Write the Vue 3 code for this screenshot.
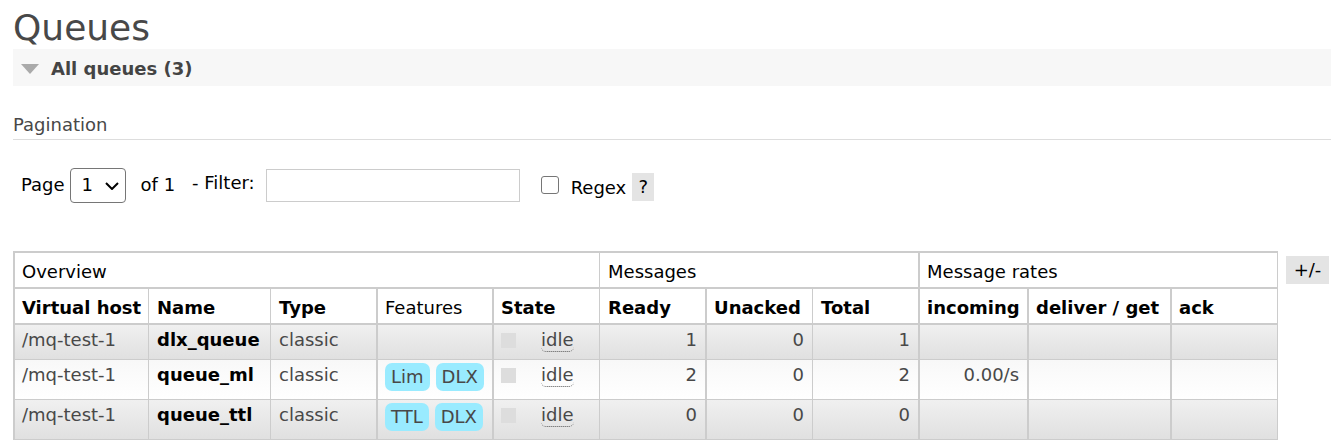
<script setup>
import { ref } from 'vue'

const page = ref('1')
const filter = ref('')
const regex = ref(false)

const queues = [
  { vhost: '/mq-test-1', name: 'dlx_queue', type: 'classic', features: [], state: 'idle', ready: 1, unacked: 0, total: 1, incoming: '' },
  { vhost: '/mq-test-1', name: 'queue_ml', type: 'classic', features: ['Lim', 'DLX'], state: 'idle', ready: 2, unacked: 0, total: 2, incoming: '0.00/s' },
  { vhost: '/mq-test-1', name: 'queue_ttl', type: 'classic', features: ['TTL', 'DLX'], state: 'idle', ready: 0, unacked: 0, total: 0, incoming: '' },
]
</script>

<template>
  <main class="page">
    <h1>Queues</h1>
    <h2>
      <button class="section-toggle" type="button" aria-expanded="true">
        <svg class="arrow" viewBox="0 0 18 10" aria-hidden="true"><path d="M0 0H18L9 10Z" /></svg>
        All queues (3)
      </button>
    </h2>

    <h3>Pagination</h3>
    <form class="filters" @submit.prevent>
      <label for="page">Page</label>
      <span class="select-wrap">
        <select id="page" v-model="page"><option>1</option></select>
        <svg class="chevron" viewBox="0 0 14 8" aria-hidden="true"><path d="M1 1L7 7L13 1" /></svg>
      </span>
      <span class="of">of 1</span>
      <label class="filter-label" for="filter">- Filter:</label>
      <input id="filter" v-model="filter" class="filter" type="text" />
      <input id="regex" v-model="regex" class="check" type="checkbox" />
      <label class="regex-label" for="regex">Regex</label>
      <button class="help" type="button">?</button>
    </form>

    <div class="listing">
      <table>
        <colgroup>
          <col class="c-vhost" /><col class="c-name" /><col class="c-medium" /><col class="c-features" />
          <col class="c-wide" /><col class="c-medium" /><col class="c-wide" /><col class="c-medium" />
          <col class="c-incoming" /><col class="c-deliver" /><col class="c-wide" />
        </colgroup>
        <thead>
          <tr class="groups">
            <th class="thick" colspan="5" scope="colgroup">Overview</th>
            <th colspan="3" scope="colgroup">Messages</th>
            <th class="thick" colspan="3" scope="colgroup">Message rates</th>
          </tr>
          <tr>
            <th class="thick" scope="col">Virtual host</th>
            <th scope="col">Name</th>
            <th scope="col">Type</th>
            <th class="thick plain" scope="col">Features</th>
            <th class="thick" scope="col">State</th>
            <th scope="col">Ready</th>
            <th class="thick" scope="col">Unacked</th>
            <th scope="col">Total</th>
            <th class="thick" scope="col">incoming</th>
            <th class="thick" scope="col">deliver / get</th>
            <th class="thick" scope="col">ack</th>
          </tr>
        </thead>
        <tbody>
          <tr v-for="q in queues" :key="q.name">
            <td class="thick">{{ q.vhost }}</td>
            <td><a href="#">{{ q.name }}</a></td>
            <td>{{ q.type }}</td>
            <td class="thick">
              <div v-if="q.features.length" class="tags">
                <span v-for="f in q.features" :key="f" class="tag">{{ f }}</span>
              </div>
            </td>
            <td class="thick">
              <div class="state"><i class="square"></i><abbr>{{ q.state }}</abbr></div>
            </td>
            <td class="num">{{ q.ready }}</td>
            <td class="num thick">{{ q.unacked }}</td>
            <td class="num">{{ q.total }}</td>
            <td class="num thick">{{ q.incoming }}</td>
            <td class="thick"></td>
            <td class="thick"></td>
          </tr>
        </tbody>
      </table>
      <button class="columns" type="button">+/-</button>
    </div>
  </main>
</template>

<style>
body {
  margin: 0;
  background: #fff;
}
</style>

<style scoped>
.page {
  padding: 6px 0 8px 13px;
  font: 18px/22px Verdana, "DejaVu Sans", sans-serif;
  color: #484848;
}
h1, h2, h3 {
  margin: 0;
  font-size: 18px;
  font-weight: normal;
}
h1 {
  font-size: 36px;
  line-height: 43px;
}
button {
  margin: 0;
  border: 0;
  padding: 0;
  font: inherit;
}
.section-toggle {
  display: flex;
  align-items: center;
  gap: 12px;
  width: 100%;
  height: 37px;
  padding: 2px 8px 0;
  background: #f7f7f7;
  color: #444;
  font-weight: bold;
  text-align: left;
}
.arrow {
  width: 18px;
  height: 10px;
  fill: #aaa;
}
h3 {
  margin-top: 28px;
  padding-bottom: 3px;
  border-bottom: 1px solid #ddd;
}
.filters {
  display: flex;
  align-items: center;
  height: 36px;
  margin: 27px 0 48px;
  padding-left: 8px;
  color: #000;
  white-space: nowrap;
}
.select-wrap {
  position: relative;
  margin: 0 15px 0 5px;
}
select {
  display: block;
  width: 56px;
  height: 35px;
  padding: 0 11px;
  appearance: none;
  border: 1px solid #767676;
  border-radius: 4px;
  background: #fff;
  color: #000;
  font: inherit;
}
.chevron {
  position: absolute;
  right: 7px;
  top: 14px;
  width: 14px;
  height: 8px;
  fill: none;
  stroke: #000;
  stroke-width: 2;
  pointer-events: none;
}
.filter-label {
  margin: 0 11px 4px 17px;
}
.filter {
  box-sizing: border-box;
  width: 254px;
  height: 33px;
  padding: 0 6px;
  border: 1px solid #ccc;
  font: inherit;
}
.check {
  box-sizing: border-box;
  width: 18px;
  height: 18px;
  margin: 0 12px 0 21px;
  appearance: none;
  border: 1px solid #767676;
  border-radius: 3px;
  background: #fff;
}
.check:checked {
  background: #0075ff;
}
.regex-label {
  margin: 5px 6px 0 0;
}
.help, .columns {
  flex: none;
  height: 28px;
  background: #e4e4e4;
  color: #000;
}
.help {
  width: 22px;
  margin-top: 4px;
}
.listing {
  display: flex;
  align-items: flex-start;
  gap: 8px;
  padding-right: 2px;
}
.columns {
  width: 43px;
  margin-top: 5px;
}
table {
  flex: 1;
  min-width: 0;
  width: 100%;
  table-layout: fixed;
  border-spacing: 0;
  border-top: 2px solid #ccc;
  border-right: 1px solid #ccc;
}
.c-vhost { width: 135px; }
.c-name { width: 122px; }
.c-medium { width: 106px; }
.c-wide { width: 107px; }
.c-features { width: 116px; }
.c-incoming { width: 109px; }
.c-deliver { width: 143px; }
th, td {
  padding: 4px 8px 8px;
  border-left: 1px solid #ccc;
  border-bottom: 1px solid #ccc;
  text-align: left;
  vertical-align: top;
  white-space: nowrap;
}
.thick {
  border-left-width: 2px;
  padding-left: 7px;
}
th {
  padding-top: 8px;
  padding-bottom: 4px;
  border-bottom-width: 2px;
  color: #000;
}
.groups th, .plain {
  font-weight: normal;
}
tbody tr:nth-child(odd) td {
  background: linear-gradient(#f0f0f0, #e0e0e0);
}
tbody tr:nth-child(even) td {
  background: linear-gradient(#f8f8f8, #fff);
}
td a {
  color: #000;
  font-weight: bold;
  text-decoration: none;
}
.num {
  text-align: right;
}
.tags {
  display: flex;
  gap: 6px;
  margin-top: -1px;
}
.tag {
  padding: 3px 6px;
  border-radius: 7px;
  background: #99ebff;
}
.state {
  display: flex;
  align-items: flex-start;
}
.square {
  width: 15px;
  height: 15px;
  margin: 4px 25px 0 0;
  background: #ddd;
}
abbr {
  border-bottom: 1px dotted #555;
  border-radius: 5px;
  margin-bottom: -1px;
}
</style>
